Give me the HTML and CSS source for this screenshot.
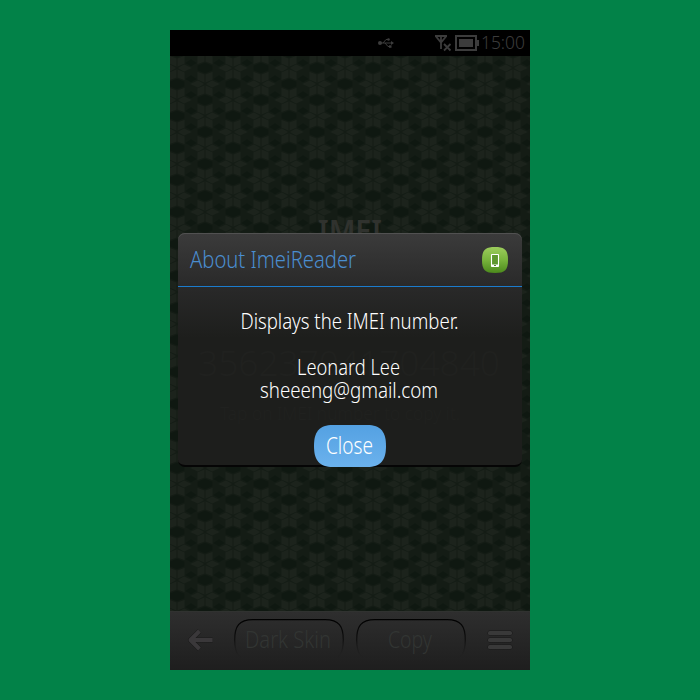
FILE: index.html
```html
<!DOCTYPE html>
<html lang="en">
<head>
<meta charset="utf-8">
<title>ImeiReader</title>
<link rel="stylesheet" href="styles.css">
</head>
<body>
<main class="phone">
  <header class="status">
    <svg class="usb" width="18" height="12" viewBox="0 0 18 12"><circle cx="3" cy="6" r="2"/><path d="M3 6H15M6 6L9 2.5H11M8 6L11 9.5H13" class="line"/><path d="M14 4L17 6L14 8Z"/><circle cx="11.5" cy="2.5" r="1.3"/><path d="M12 8.3h2.5v2.5H12z"/></svg>
    <svg class="signal" width="17" height="17" viewBox="0 0 17 17"><path d="M0 1H12M1 1.5L6 7.5L11 1.5M6 1V14" class="thick"/><path d="M9 9L15.5 15.5M15.5 9L9 15.5" class="thick"/></svg>
    <svg class="battery" width="24" height="16" viewBox="0 0 24 16"><path d="M1 1H21V15H1Z" class="case"/><path d="M4 4H18V12H4ZM22 5h2v6h-2z"/></svg>
    <svg class="time" width="46" height="26"><text x="0" y="19" textLength="44" lengthAdjust="spacingAndGlyphs">15:00</text></svg>
  </header>
  <section class="wallpaper">
    <svg class="pattern" width="360" height="555">
      <defs>
        <g id="flower">
          <path class="hex" d="M0 10.5L7.5 13.5V18.5L0 21.5L-7.5 18.5V13.5Z"/>
          <path class="facet" d="M-8 -5L-14 -1.5L-20 -5L-14 -9ZM8 -5L14 -1.5L20 -5L14 -9Z"/>
          <path class="petal" d="M-1 0L-7 -3.5L-14.5 0L-7 3.5ZM1 0L7 -3.5L14.5 0L7 3.5ZM-.6 -1.5L-7.5 -4.5V-12L-.6 -9.5ZM.6 -1.5L7.5 -4.5V-12L.6 -9.5ZM-.6 1.5L-7.5 4.5V12L-.6 9.5ZM.6 1.5L7.5 4.5V12L.6 9.5Z"/>
        </g>
        <pattern id="weave" width="56" height="32" patternUnits="userSpaceOnUse" x="7" y="12">
          <rect width="56" height="32" class="ground"/>
          <use href="#flower" x="28" y="-16"/><use href="#flower" x="28" y="16"/><use href="#flower" x="28" y="48"/>
          <use href="#flower" x="0" y="-32"/><use href="#flower" x="0" y="0"/><use href="#flower" x="0" y="32"/>
          <use href="#flower" x="56" y="-32"/><use href="#flower" x="56" y="0"/><use href="#flower" x="56" y="32"/>
        </pattern>
      </defs>
      <rect width="360" height="555" fill="url(#weave)"/>
      <text class="heading" x="148" y="186" textLength="64" lengthAdjust="spacingAndGlyphs">IMEI</text>
    </svg>
    <article class="dialog">
      <header class="bar">
        <svg width="220" height="40"><text class="title" x="0" y="28" textLength="166" lengthAdjust="spacingAndGlyphs">About ImeiReader</text></svg>
        <svg class="app" width="26" height="26" viewBox="0 0 26 26"><defs><linearGradient id="green" x2="0" y2="1"><stop stop-color="#9ccc5c"/><stop offset=".5" stop-color="#78b43c"/><stop offset="1" stop-color="#4c8a1c"/></linearGradient></defs><path fill="url(#green)" d="M13 0C23 0 26 3 26 13S23 26 13 26S0 23 0 13S3 0 13 0Z"/><rect x="9.5" y="7.5" width="7" height="12" rx=".5" fill="#5f982f" stroke="#fff" stroke-width="1.1"/><path d="M9.5 17.5H16.5V19.5H9.5Z" fill="#fff"/><path d="M12 18.5H14" stroke="#55842e"/></svg>
      </header>
      <svg class="message" width="344" height="138">
        <text class="ghost number" x="20" y="89" textLength="302" lengthAdjust="spacingAndGlyphs">356237041704840</text>
        <text class="ghost hint" x="42" y="133" textLength="240" lengthAdjust="spacingAndGlyphs">Tap on IMEI number to copy it.</text>
        <text x="62.5" y="42" textLength="218" lengthAdjust="spacingAndGlyphs">Displays the IMEI number.</text>
        <text x="119" y="88" textLength="103" lengthAdjust="spacingAndGlyphs">Leonard Lee</text>
        <text x="82" y="111" textLength="178" lengthAdjust="spacingAndGlyphs">sheeeng@gmail.com</text>
      </svg>
      <button class="close"><svg width="72" height="42"><defs><linearGradient id="blue" x2="0" y2="1"><stop stop-color="#54a1e2"/><stop offset="1" stop-color="#6bb2ed"/></linearGradient></defs><path fill="url(#blue)" d="M19 0H53C67 0 72 7 72 21S67 42 53 42H19C5 42 0 35 0 21S5 0 19 0Z"/><text x="12" y="29" textLength="47" lengthAdjust="spacingAndGlyphs">Close</text></svg></button>
    </article>
  </section>
  <footer class="tools">
    <svg class="back" width="26" height="24" viewBox="0 0 26 24"><path d="M12.5 3L3.5 12L12.5 21M4 12H25.5" class="shade"/><path d="M12.5 3L3.5 12L12.5 21M4 12H25.5" class="arrow"/></svg>
    <svg class="pill" width="110" height="42"><defs><linearGradient id="edge" gradientUnits="userSpaceOnUse" x1="0" y1="0" x2="0" y2="42"><stop stop-color="#000"/><stop offset=".5" stop-color="#111"/><stop offset="1" stop-color="#232323" stop-opacity="0"/></linearGradient></defs><path class="outline" d="M19 .7H91C105 .7 109.3 7 109.3 21S105 41.5 91 41.5H19C5 41.5 .7 35 .7 21S5 .7 19 .7Z"/><text x="11" y="29" textLength="86" lengthAdjust="spacingAndGlyphs">Dark Skin</text></svg>
    <svg class="pill" width="110" height="42"><path class="outline" d="M19 .7H91C105 .7 109.3 7 109.3 21S105 41.5 91 41.5H19C5 41.5 .7 35 .7 21S5 .7 19 .7Z"/><text x="32" y="29" textLength="44" lengthAdjust="spacingAndGlyphs">Copy</text></svg>
    <svg class="menu" width="26" height="20" viewBox="0 0 26 20"><g fill="#191919"><rect x=".5" y=".5" width="25" height="5" rx="2.2"/><rect x=".5" y="7.5" width="25" height="5" rx="2.2"/><rect x=".5" y="14.5" width="25" height="5" rx="2.2"/></g><g fill="#393939"><rect x="1" y="1" width="24" height="4" rx="1.6"/><rect x="1" y="8" width="24" height="4" rx="1.6"/><rect x="1" y="15" width="24" height="4" rx="1.6"/></g></svg>
  </footer>
</main>
</body>
</html>
```
FILE: styles.css
```css
* { box-sizing: border-box; }
body { margin: 0; height: 700px; background: #028248; display: flex; align-items: center; justify-content: center; font-family: "Noto Sans", sans-serif; }
svg { display: block; flex: none; overflow: visible; }
.phone { width: 360px; height: 640px; display: grid; grid-template-rows: 26px 555px 59px; overflow: hidden; }
.status { background: #000; display: flex; align-items: flex-start; fill: #3c3c3c; }
.status .line { fill: none; stroke: #3c3c3c; stroke-width: 1; }
.status .thick { fill: none; stroke: #3c3c3c; stroke-width: 1.8; }
.status .case { fill: none; stroke: #3c3c3c; stroke-width: 2; }
.usb { margin: 7px 0 0 207px; }
.signal { margin: 5px 0 0 40px; }
.battery { margin: 5px 0 0 3px; }
.time { margin-left: 2px; font-size: 18.5px; font-weight: 350; }
.wallpaper { position: relative; background: #121a14; }
.ground { fill: #141c15; }
.petal { fill: #1c231c; }
.facet { fill: #0f1811; }
.hex { fill: #0f1811; }
.heading { font-size: 30px; font-weight: 600; fill: #30322e; }
.dialog { position: absolute; left: 8px; top: 177px; width: 344px; height: 234px; border-radius: 7px; background: linear-gradient(#3b3b3b, #292929 54px, #1d1e1c 105px, #1d1e1c); border-bottom: 2px solid #050505; box-shadow: inset 0 1px #515151; }
.bar { height: 54px; padding: 0 14px 0 12px; display: flex; align-items: center; justify-content: space-between; border-bottom: 1px solid #1b7bcc; }
.title { font-size: 23px; font-weight: 350; fill: #4a8dcf; }
.message { font-size: 21.5px; font-weight: 350; fill: #fff; }
.message .ghost { fill: #20211f; }
.message .number { font-size: 34px; font-weight: 300; }
.message .hint { font-size: 18px; }
.close { display: block; margin: 0 auto; padding: 0; border: 0; background: none; font: 350 23px "Noto Sans", sans-serif; fill: #fff; }
.tools { display: flex; align-items: flex-start; border-top: 1px solid #303230; background: linear-gradient(#2e2e2e, #1e1e1e); font-size: 23px; font-weight: 350; fill: #323533; }
.back { margin: 16px 0 0 17px; }
.back path { fill: none; stroke-linejoin: round; }
.shade { stroke: #1a1a1a; stroke-width: 5; }
.arrow { stroke: #3a383a; stroke-width: 4; }
.pill { margin: 7px 0 0 21px; }
.pill + .pill { margin-left: 12px; }
.outline { fill: none; stroke: url(#edge); stroke-width: 1.3; }
.menu { margin: 18px 0 0 21px; }
```
